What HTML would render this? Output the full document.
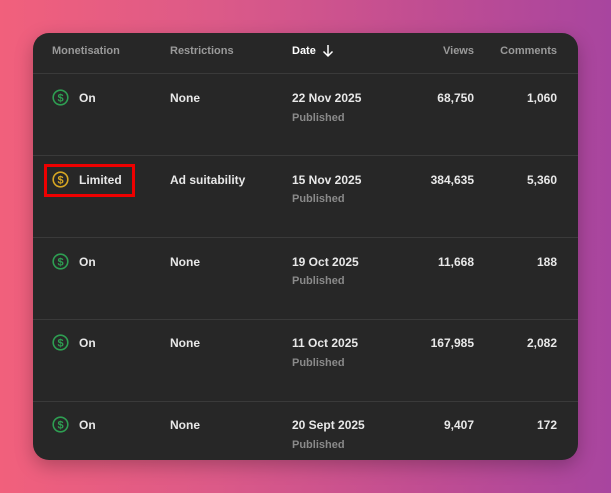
<!DOCTYPE html>
<html><head><meta charset="utf-8"><style>
*{margin:0;padding:0;box-sizing:border-box}
body{width:611px;height:493px;overflow:hidden;background:linear-gradient(90deg,#f1607c 0%,#dc5a88 35%,#c04d92 70%,#a8459f 100%);font-family:"Liberation Sans",sans-serif;position:relative}
.card{position:absolute;left:33px;top:33px;width:545px;height:427px;background:#272727;border-radius:16px;box-shadow:0 6px 18px rgba(0,0,0,.25);overflow:hidden}
.t{position:absolute;font-size:12px;color:#e8e8e8;white-space:nowrap;font-weight:bold}
.h{color:#9a9a9a;font-size:11px}
.p{color:#8a8a8a;font-weight:bold;font-size:11px}
.r{text-align:right}
.line{position:absolute;left:0;right:0;height:1px;background:#3a3a3a}
svg{position:absolute}
.box{position:absolute;left:11px;top:131px;width:91px;height:33px;border:3px solid #e00;}
</style></head><body>
<div class="card">
<div class="t h" style="left:19px;top:12px">Monetisation</div>
<div class="t h" style="left:137px;top:12px">Restrictions</div>
<div class="t" style="left:259px;top:12px;font-size:11px;color:#fff">Date</div>
<svg style="left:289px;top:11px" width="12" height="14" viewBox="0 0 12 14"><path d="M6 1v11M1.5 7.5L6 12l4.5-4.5" stroke="#fff" stroke-width="1.5" fill="none"/></svg>
<div class="t h r" style="right:104px;top:12px">Views</div>
<div class="t h r" style="right:21px;top:12px">Comments</div>
<div class="line" style="top:40px"></div>
<div class="line" style="top:122px"></div>
<div class="line" style="top:204px"></div>
<div class="line" style="top:286px"></div>
<div class="line" style="top:368px"></div>

<svg style="left:19px;top:56px" width="17" height="17" viewBox="0 0 17 17"><circle cx="8.5" cy="8.5" r="7.3" stroke="#2e9e52" stroke-width="1.6" fill="none"/><text x="8.5" y="12.5" font-size="11" text-anchor="middle" fill="#2e9e52" font-family="Liberation Sans" font-weight="bold">$</text></svg>
<div class="t" style="left:46px;top:58px">On</div>
<div class="t" style="left:137px;top:58px">None</div>
<div class="t" style="left:259px;top:58px">22 Nov 2025</div>
<div class="t p" style="left:259px;top:79px">Published</div>
<div class="t r" style="right:104px;top:58px">68,750</div>
<div class="t r" style="right:21px;top:58px">1,060</div>

<svg style="left:19px;top:138px" width="17" height="17" viewBox="0 0 17 17"><circle cx="8.5" cy="8.5" r="7.3" stroke="#d6a623" stroke-width="1.6" fill="none"/><text x="8.5" y="12.5" font-size="11" text-anchor="middle" fill="#d6a623" font-family="Liberation Sans" font-weight="bold">$</text></svg>
<div class="t" style="left:46px;top:140px">Limited</div>
<div class="box"></div>
<div class="t" style="left:137px;top:140px">Ad suitability</div>
<div class="t" style="left:259px;top:140px">15 Nov 2025</div>
<div class="t p" style="left:259px;top:160px">Published</div>
<div class="t r" style="right:104px;top:140px">384,635</div>
<div class="t r" style="right:21px;top:140px">5,360</div>

<svg style="left:19px;top:220px" width="17" height="17" viewBox="0 0 17 17"><circle cx="8.5" cy="8.5" r="7.3" stroke="#2e9e52" stroke-width="1.6" fill="none"/><text x="8.5" y="12.5" font-size="11" text-anchor="middle" fill="#2e9e52" font-family="Liberation Sans" font-weight="bold">$</text></svg>
<div class="t" style="left:46px;top:222px">On</div>
<div class="t" style="left:137px;top:222px">None</div>
<div class="t" style="left:259px;top:222px">19 Oct 2025</div>
<div class="t p" style="left:259px;top:242px">Published</div>
<div class="t r" style="right:104px;top:222px">11,668</div>
<div class="t r" style="right:21px;top:222px">188</div>

<svg style="left:19px;top:301px" width="17" height="17" viewBox="0 0 17 17"><circle cx="8.5" cy="8.5" r="7.3" stroke="#2e9e52" stroke-width="1.6" fill="none"/><text x="8.5" y="12.5" font-size="11" text-anchor="middle" fill="#2e9e52" font-family="Liberation Sans" font-weight="bold">$</text></svg>
<div class="t" style="left:46px;top:303px">On</div>
<div class="t" style="left:137px;top:303px">None</div>
<div class="t" style="left:259px;top:303px">11 Oct 2025</div>
<div class="t p" style="left:259px;top:324px">Published</div>
<div class="t r" style="right:104px;top:303px">167,985</div>
<div class="t r" style="right:21px;top:303px">2,082</div>

<svg style="left:19px;top:383px" width="17" height="17" viewBox="0 0 17 17"><circle cx="8.5" cy="8.5" r="7.3" stroke="#2e9e52" stroke-width="1.6" fill="none"/><text x="8.5" y="12.5" font-size="11" text-anchor="middle" fill="#2e9e52" font-family="Liberation Sans" font-weight="bold">$</text></svg>
<div class="t" style="left:46px;top:385px">On</div>
<div class="t" style="left:137px;top:385px">None</div>
<div class="t" style="left:259px;top:385px">20 Sept 2025</div>
<div class="t p" style="left:259px;top:406px">Published</div>
<div class="t r" style="right:104px;top:385px">9,407</div>
<div class="t r" style="right:21px;top:385px">172</div>
</div>
</body></html>
